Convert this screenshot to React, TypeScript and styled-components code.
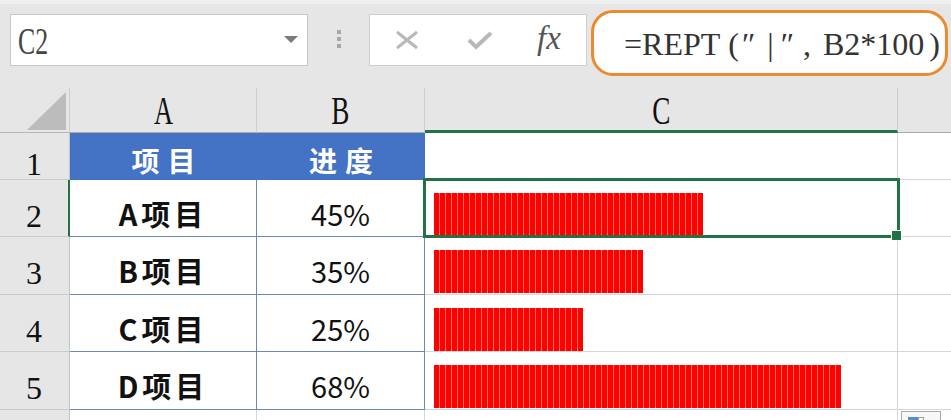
import React from "react";
import styled, { createGlobalStyle } from "styled-components";

const GlobalStyle = createGlobalStyle`
  html, body { margin: 0; padding: 0; background: #e6e6e6; }
  body { width: 951px; height: 420px; overflow: hidden; }
  * { box-sizing: border-box; }
`;

const GREEN = "#217346";
const TABLE_LINE = "#6d88b4";
const GRID_LINE = "#d6d6d6";

const Screen = styled.div`
  position: relative;
  width: 951px;
  height: 420px;
  overflow: hidden;
  background: #e6e6e6;
  font-family: "Liberation Serif", serif;
`;

const Toolbar = styled.div`
  height: 88px;
  padding: 14px 0 0 10px;
  display: flex;
  align-items: flex-start;
  background: linear-gradient(#efefef 0 4px, #e6e6e6 4px);
`;

const NameBox = styled.div`
  width: 298px;
  height: 52px;
  background: #fff;
  border: 1px solid #c8c8c8;
  display: flex;
  align-items: center;
  justify-content: space-between;
  padding: 2px 9px 0 6px;
`;

const Narrow = styled.span<{ $scale: number }>`
  display: inline-block;
  transform: scaleX(${(p) => p.$scale});
  transform-origin: center;
`;

const NameText = styled.span`
  font-family: "Liberation Serif", serif;
  font-size: 38px;
  color: #454545;
  line-height: 1;
  margin-left: -6px;
`;

const DropArrow = styled.span`
  width: 0;
  height: 0;
  border-left: 7px solid transparent;
  border-right: 7px solid transparent;
  border-top: 7px solid #7b7b7b;
  margin-top: -4px;
`;

const Dots = styled.div`
  width: 61px;
  display: flex;
  flex-direction: column;
  align-items: center;
  gap: 3px;
  padding-top: 16px;
`;

const Dot = styled.span`
  width: 4px;
  height: 4px;
  background: #a8a8a8;
`;

const FxBox = styled.div`
  width: 218px;
  height: 52px;
  background: #fff;
  border: 1px solid #d0d0d0;
  display: flex;
  align-items: center;
  padding-left: 25px;
`;

const IconSlot = styled.span<{ $ml: number }>`
  display: inline-flex;
  margin-left: ${(p) => p.$ml}px;
`;

const FxLabel = styled.span`
  font-family: "Liberation Serif", serif;
  font-style: italic;
  font-size: 33px;
  color: #555;
  margin-left: 44px;
  margin-top: -4px;
`;

const FormulaBox = styled.div`
  margin: -4px 0 0 4px;
  width: 357px;
  height: 66px;
  background: #fff;
  border: 3px solid #eb8a2e;
  border-radius: 22px;
  display: flex;
  align-items: center;
  padding: 2px 0 0 30px;
  font-family: "Liberation Serif", "DejaVu Serif", serif;
  font-size: 32px;
  color: #333;
  white-space: nowrap;
`;

const FormulaPart = styled.span<{ $ml?: number }>`
  margin-left: ${(p) => p.$ml ?? 0}px;
`;

const Sheet = styled.div`
  display: grid;
  grid-template-columns: 70px 187px 168px 473px 1fr;
  grid-template-rows: 45px 47px 57px 58px 57px 58px 1fr;
  height: 332px;
`;

const Corner = styled.div`
  background: #e6e6e6;
  border-right: 1px solid #cdcdcd;
  border-bottom: 1px solid #b5b5b5;
  display: flex;
  justify-content: flex-end;
  align-items: flex-end;
  padding: 0 3px 2px 0;
`;

const ColHead = styled.div<{ $selected?: boolean; $last?: boolean }>`
  background: #e6e6e6;
  border-right: ${(p) => (p.$last ? "none" : "1px solid #cdcdcd")};
  border-bottom: ${(p) => (p.$selected ? `3px solid ${GREEN}` : "1px solid #a9a9a9")};
  display: flex;
  align-items: center;
  justify-content: center;
  padding-top: ${(p) => (p.$selected ? 4 : 2)}px;
  font-family: "Liberation Serif", serif;
  font-size: 40px;
  line-height: 1;
  color: #111;
`;

const RowHead = styled.div<{ $selected?: boolean }>`
  background: #e6e6e6;
  border-right: ${(p) => (p.$selected ? `2px solid ${GREEN}` : "1px solid #c4c4c4")};
  border-bottom: 1px solid #cbcbcb;
  display: flex;
  align-items: center;
  justify-content: center;
  padding: 15px ${(p) => (p.$selected ? 0 : 1)}px 0 0;
  font-family: "Liberation Serif", serif;
  font-size: 32px;
  line-height: 1;
  color: #111;
`;

const TitleCell = styled.div`
  background: #4472c4;
  color: #fff;
  display: flex;
  align-items: center;
  justify-content: center;
  padding: 6px 0 0 8px;
  font-family: "Noto Sans CJK SC", sans-serif;
  font-weight: 700;
  font-size: 28px;
  letter-spacing: 8px;
  line-height: 1;
`;

const DataCell = styled.div<{ $kind: "label" | "pct" }>`
  background: #fff;
  border-right: 1px solid ${TABLE_LINE};
  border-bottom: 1px solid ${TABLE_LINE};
  display: flex;
  align-items: center;
  justify-content: center;
  padding-top: 10px;
  font-family: "Noto Sans CJK SC", sans-serif;
  font-weight: ${(p) => (p.$kind === "label" ? 600 : 400)};
  font-size: 29px;
  letter-spacing: ${(p) => (p.$kind === "label" ? 4 : 0)}px;
  line-height: 1;
  color: #111;
`;

const PlainCell = styled.div<{ $edge?: boolean }>`
  background: #fff;
  border-right: ${(p) => (p.$edge ? "none" : `1px solid ${GRID_LINE}`)};
  border-bottom: 1px solid ${GRID_LINE};
`;

const ChartCell = styled.div<{ $selected?: boolean }>`
  position: relative;
  z-index: ${(p) => (p.$selected ? 2 : 0)};
  background: #fff;
  border-right: 1px solid ${GRID_LINE};
  border-bottom: 1px solid ${GRID_LINE};
  padding: 13px 0 0 9px;

  ${(p) =>
    p.$selected
      ? `
    &::after {
      content: "";
      position: absolute;
      left: -2px;
      top: -2px;
      right: -3px;
      bottom: -2px;
      border: 3px solid ${GREEN};
      pointer-events: none;
    }
    &::before {
      content: "";
      position: absolute;
      right: -5px;
      bottom: -5px;
      width: 9px;
      height: 9px;
      background: ${GREEN};
      border: 1px solid #fff;
      z-index: 3;
    }
  `
      : ""}
`;

const Bar = styled.div`
  height: 43px;
  background: repeating-linear-gradient(
    90deg,
    #ff0000 0 5px,
    #ff7466 5px 6px
  );
`;

const PasteBadge = styled.div`
  position: absolute;
  left: 901px;
  top: 411px;
  width: 40px;
  height: 16px;
  border: 1px solid #a9a9a9;
  background: #f7f7f7;
  padding: 5px 0 0 6px;
  display: flex;
`;

const BadgeBlue = styled.span`
  width: 10px;
  height: 8px;
  background: #5f8ac9;
`;

const BadgeGray = styled.span`
  width: 6px;
  height: 8px;
  border: 1px solid #9a9a9a;
  background: #fff;
`;

const rows = [
  { label: "A项目", pct: 0.45 },
  { label: "B项目", pct: 0.35 },
  { label: "C项目", pct: 0.25 },
  { label: "D项目", pct: 0.68 },
];

const CHAR_WIDTH = 6;

export default function App() {
  return (
    <Screen>
      <GlobalStyle />
      <Toolbar>
        <NameBox>
          <NameText>
            <Narrow $scale={0.68}>C2</Narrow>
          </NameText>
          <DropArrow />
        </NameBox>
        <Dots>
          <Dot />
          <Dot />
          <Dot />
        </Dots>
        <FxBox>
          <IconSlot $ml={0}>
            <svg width="24" height="20" viewBox="0 0 24 20">
              <path d="M2 2 L22 18 M22 2 L2 18" stroke="#b8b8b8" strokeWidth="3" fill="none" />
            </svg>
          </IconSlot>
          <IconSlot $ml={48}>
            <svg width="26" height="20" viewBox="0 0 26 20">
              <path d="M2 10 L9 17 L24 3" stroke="#b8b8b8" strokeWidth="4" fill="none" />
            </svg>
          </IconSlot>
          <FxLabel>fx</FxLabel>
        </FxBox>
        <FormulaBox>
          <FormulaPart>=REPT</FormulaPart>
          <FormulaPart $ml={8}>(</FormulaPart>
          <FormulaPart $ml={3}>″</FormulaPart>
          <FormulaPart $ml={12}>|</FormulaPart>
          <FormulaPart $ml={7}>″</FormulaPart>
          <FormulaPart $ml={9}>,</FormulaPart>
          <FormulaPart $ml={12}>B2*100</FormulaPart>
          <FormulaPart $ml={5}>)</FormulaPart>
        </FormulaBox>
      </Toolbar>

      <Sheet>
        <Corner>
          <svg width="39" height="38" viewBox="0 0 39 38">
            <polygon points="39,0 39,38 0,38" fill="#bcbcbc" />
          </svg>
        </Corner>
        <ColHead>
          <Narrow $scale={0.66}>A</Narrow>
        </ColHead>
        <ColHead>
          <Narrow $scale={0.68}>B</Narrow>
        </ColHead>
        <ColHead $selected>
          <Narrow $scale={0.68}>C</Narrow>
        </ColHead>
        <ColHead $last />

        <RowHead>1</RowHead>
        <TitleCell>项目</TitleCell>
        <TitleCell>进度</TitleCell>
        <ChartCell />
        <PlainCell $edge />

        {rows.map((r, i) => (
          <React.Fragment key={r.label}>
            <RowHead $selected={i === 0}>{i + 2}</RowHead>
            <DataCell $kind="label">{r.label}</DataCell>
            <DataCell $kind="pct">{Math.round(r.pct * 100)}%</DataCell>
            <ChartCell $selected={i === 0}>
              <Bar style={{ width: Math.round(r.pct * 100) * CHAR_WIDTH - 1 }} />
            </ChartCell>
            <PlainCell $edge />
          </React.Fragment>
        ))}

        <RowHead />
        <PlainCell />
        <PlainCell />
        <PlainCell />
        <PlainCell $edge />
      </Sheet>
      <PasteBadge>
        <BadgeBlue />
        <BadgeGray />
      </PasteBadge>
    </Screen>
  );
}
